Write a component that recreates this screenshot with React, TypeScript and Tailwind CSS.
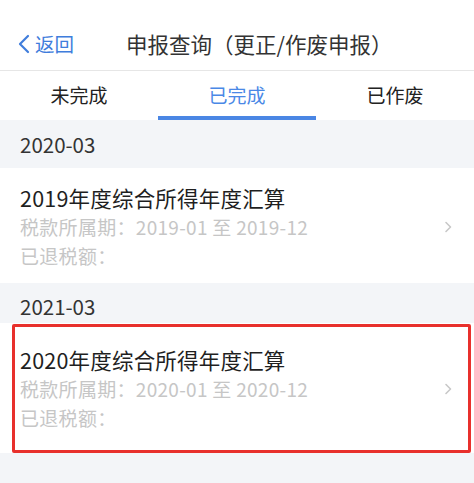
export default function App() {
  const font = { fontFamily: '"Noto Sans CJK SC", "Noto Sans", sans-serif' };

  return (
    <div className="w-[474px] h-[483px] bg-[#f3f5f8] overflow-hidden" style={font}>
      {/* nav bar */}
      <div className="h-[71px] bg-white border-b border-[#e6e6e6] flex items-center pt-[17px] pl-[17px]">
        <div className="flex items-center text-[#3f7ddc]">
          <svg width="14" height="20" viewBox="0 0 14 20" fill="none">
            <path d="M11 2 L3 10 L11 18" stroke="#3f7ddc" strokeWidth="2.2" strokeLinecap="round" strokeLinejoin="round" />
          </svg>
          <span className="ml-[4px] text-[19.5px] leading-none">返回</span>
        </div>
        <div className="ml-[52px] text-[21.5px] leading-none text-[#333]">申报查询（更正/作废申报）</div>
      </div>

      {/* tabs */}
      <div className="grid grid-cols-3 bg-white h-[49px]">
        <div className="flex items-center justify-center text-[19px] text-[#222]">未完成</div>
        <div className="relative flex items-center justify-center text-[19px] text-[#4a88e6]">
          已完成
          <div className="absolute bottom-0 left-0 right-0 h-[4px] bg-[#4a86e4]" />
        </div>
        <div className="flex items-center justify-center text-[19px] text-[#222]">已作废</div>
      </div>

      {/* group 2020-03 */}
      <div className="h-[48px] flex items-center pl-[20px] text-[20.5px] text-[#333]">2020-03</div>
      <div className="bg-white flex items-center pl-[20px] pr-[22px] pt-[15px] pb-[13px]">
        <div className="flex-1">
          <div className="text-[21.5px] tracking-[0.2px] leading-[29px] text-[#1f1f1f]">2019年度综合所得年度汇算</div>
          <div className="text-[19px] tracking-[0.3px] leading-[29px] text-[#c6c6c6]">税款所属期：2019-01 至 2019-12</div>
          <div className="text-[19px] tracking-[0.3px] leading-[29px] text-[#c6c6c6]">已退税额：</div>
        </div>
        <svg width="8" height="12" viewBox="0 0 8 12" fill="none">
          <path d="M2 1.5 L6.5 6 L2 10.5" stroke="#c8c8c8" strokeWidth="1.6" strokeLinecap="round" strokeLinejoin="round" />
        </svg>
      </div>

      {/* group 2021-03 */}
      <div className="h-[40px] flex items-center pl-[20px] pt-[6px] text-[20.5px] text-[#333]">2021-03</div>
      <div className="relative bg-white flex items-center pl-[20px] pr-[22px] pt-[22px] pb-[21px]">
        <div className="flex-1">
          <div className="text-[21.5px] tracking-[0.2px] leading-[29px] text-[#1f1f1f]">2020年度综合所得年度汇算</div>
          <div className="text-[19px] tracking-[0.3px] leading-[29px] text-[#c6c6c6]">税款所属期：2020-01 至 2020-12</div>
          <div className="text-[19px] tracking-[0.3px] leading-[29px] text-[#c6c6c6]">已退税额：</div>
        </div>
        <svg width="8" height="12" viewBox="0 0 8 12" fill="none">
          <path d="M2 1.5 L6.5 6 L2 10.5" stroke="#c8c8c8" strokeWidth="1.6" strokeLinecap="round" strokeLinejoin="round" />
        </svg>
        {/* annotation box */}
        <div className="absolute left-[12px] right-[3px] top-[1px] bottom-0 border-[3px] border-[#e8302c] rounded-[2px] pointer-events-none" />
      </div>
    </div>
  );
}
